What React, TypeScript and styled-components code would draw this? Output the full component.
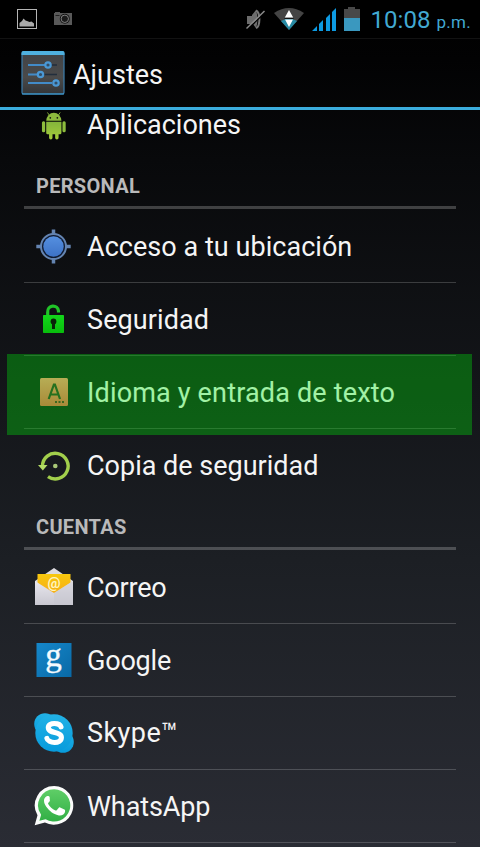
import React from 'react';
import styled, { createGlobalStyle } from 'styled-components';

const GlobalStyle = createGlobalStyle`
  * { box-sizing: border-box; }
  html, body { margin: 0; padding: 0; background: #000; overflow: hidden; }
`;

const Screen = styled.main`
  width: 480px;
  height: 847px;
  display: flex;
  flex-direction: column;
  overflow: hidden;
  font-family: Roboto, sans-serif;
  color: #f5f5f5;
  background: linear-gradient(#000 0, #020203 60px, #08090b 160px, #14161a 400px, #1c1f24 560px, #2a2c34 847px);
`;

const StatusBar = styled.header`
  flex: none;
  display: flex;
  align-items: center;
  justify-content: space-between;
  height: 39px;
  padding: 0 9px 0 17px;
  background: #000;
  border-bottom: 1px solid #121212;
`;

const StatusGroup = styled.div<{ $gap: number }>`
  display: flex;
  align-items: center;
  gap: ${(p) => p.$gap}px;
`;

const Clock = styled.time`
  display: flex;
  align-items: baseline;
  gap: 6px;
  margin-left: 3px;
  padding-top: 3px;
  color: #42a9d2;
  font-size: 24px;
  line-height: 36px;
  white-space: nowrap;
`;

const Meridiem = styled.span`
  font-size: 17px;
  letter-spacing: 0.3px;
`;

const ActionBar = styled.div`
  flex: none;
  display: flex;
  align-items: center;
  gap: 8px;
  height: 71px;
  padding: 0 0 0 21px;
  border-bottom: 3px solid #3badde;
`;

const Title = styled.h1`
  margin: 3px 0 0;
  font-size: 27px;
  line-height: 32px;
  font-weight: 400;
`;

const Viewport = styled.div`
  flex: 1;
  min-height: 0;
  overflow: hidden;
`;

const List = styled.div`
  margin-top: -22px;
  padding: 0 24px;
`;

const Section = styled.section`
  padding-bottom: 0;
`;

const SectionTitle = styled.h2`
  display: flex;
  align-items: center;
  height: 48px;
  margin: 0 0 1px;
  padding: 4px 12px 0;
  border-bottom: 3px solid rgba(255, 255, 255, 0.22);
  color: #b9b9ba;
  font-size: 20px;
  line-height: 24px;
  font-weight: 700;
  letter-spacing: 0.3px;
`;

const Row = styled.div<{ $last?: boolean }>`
  position: relative;
  display: flex;
  align-items: center;
  height: 73px;
  padding-left: 6px;
  border-bottom: ${(p) => (p.$last ? 'none' : '1px solid rgba(255, 255, 255, 0.19)')};
`;

const IconBox = styled.span`
  position: relative;
  z-index: 2;
  display: flex;
  align-items: center;
  justify-content: center;
  width: 48px;
  height: 48px;
  margin-right: 9px;
`;

const Label = styled.span<{ $spacing: number; $bright?: boolean; $raised?: boolean }>`
  padding-top: ${(p) => (p.$raised ? 0 : 1)}px;
  padding-bottom: ${(p) => (p.$raised ? 1 : 0)}px;
  color: ${(p) => (p.$bright ? '#fff' : 'inherit')};
  font-size: 27px;
  line-height: 36px;
  letter-spacing: ${(p) => p.$spacing}px;
  white-space: nowrap;
`;

const Highlight = styled.div`
  position: absolute;
  z-index: 1;
  top: -2px;
  left: -17px;
  right: -16px;
  height: 81px;
  background: rgba(0, 220, 12, 0.37);
`;

const PictureIcon = () => (
  <svg width="20" height="20" viewBox="0 0 20 20">
    <rect x=".5" y=".5" width="19" height="19" fill="none" stroke="#b5b5b5" />
    <path d="M2.500 17.500v-3.500l2.500-2 1.500-2.500 2 2 1.500.5 2.500 1 2-.5 2.500 2v3z" fill="#aaa" />
  </svg>
);

const CameraIcon = () => (
  <svg width="18" height="14" viewBox="0 0 18 14">
    <path d="M0 1h1V0h5v1h12v12H0z" fill="#595959" />
    <circle cx="10.800" cy="6.800" r="5" fill="#111" />
    <circle cx="10.800" cy="6.800" r="3.700" fill="#1a1a1a" stroke="#808080" strokeWidth="1" />
    <path d="M1.500 3.500h4" stroke="#222" />
  </svg>
);

const MutedIcon = () => (
  <svg width="20" height="21" viewBox="0 0 20 21">
    <path d="M1 7h5v8H1zM6 6l4-5q3 9.500 0 18l-4-5z" fill="#6c6c6c" />
    <path d="M10 1.500c4.500 2 4.500 16 0 17.500" fill="none" stroke="#777" strokeWidth="2" />
    <path d="M1.500 20.500 19.500 3" stroke="#000" strokeWidth="1.300" />
    <path d="M.5 19.500 18.500 2" stroke="#8a8a8a" strokeWidth="1.500" />
  </svg>
);

const WifiIcon = () => (
  <svg width="30" height="24" viewBox="0 0 30 24">
    <path d="M0 6Q15-4 30 6L15 23z" fill="#444" />
    <path d="M7 14Q15 9 23 14L15 23z" fill="#278aa4" />
    <path d="M15 3l4.200 7.500h-8.400zM15 20l-4-7.500h8z" fill="#fff" />
    <path d="M10.500 11.500h9" stroke="#111" />
  </svg>
);

const SignalIcon = () => (
  <svg width="24" height="23" viewBox="0 0 24 23">
    <path d="M0 23l5-5v5zM7 16l4-4v11H7zM14 10l4-4v17h-4zM20 4l4-4v23h-4z" fill="#0d9ae2" />
  </svg>
);

const BatteryIcon = () => (
  <svg width="16" height="24" viewBox="0 0 16 24">
    <path d="M4 0h7v2h5v9H0V2h4z" fill="#484848" />
    <path d="M0 11h16v13H0z" fill="#3a98bf" />
  </svg>
);

const SettingsIcon = () => (
  <svg width="44" height="44" viewBox="0 0 44 44">
    <defs>
      <linearGradient id="panel" x2="0" y2="1">
        <stop stopColor="#414347" />
        <stop offset=".6" stopColor="#4a4a4a" />
        <stop offset="1" stopColor="#333538" />
      </linearGradient>
    </defs>
    <rect x="1" y="1" width="42" height="42" rx="1.500" fill="url(#panel)" stroke="#3d7fae" strokeWidth="1.200" />
    <path d="M.5 4V2Q.5 0 2 0h40q1.500 0 1.500 2v2z" fill="#4fb0df" />
    <path d="M1 43h42" stroke="#3fa4dd" />
    <path d="M27 14h9M19 23.500h17" stroke="#222e3c" strokeWidth="1.500" />
    <path d="M7 14h17M7 23.500h9M7 32h24" stroke="#428bc8" strokeWidth="1.800" />
    <g fill="#334d66" stroke="#4a98d5" strokeWidth="2.200">
      <circle cx="27" cy="14" r="2.700" />
      <circle cx="19.500" cy="23.500" r="2.700" />
      <circle cx="35" cy="32" r="2.700" />
    </g>
  </svg>
);

const AndroidIcon = () => (
  <svg width="48" height="48" viewBox="0 0 48 48">
    <defs>
      <linearGradient id="robot" x2="0" y2="1">
        <stop stopColor="#84b53b" />
        <stop offset="1" stopColor="#a6cf3b" />
      </linearGradient>
    </defs>
    <g transform="translate(1.500 .8) scale(.95 1)">
      <path d="M15.500 19a8 8 0 0 1 16 0z" fill="#8dba3d" />
      <path d="M18.500 13l-1.500-2M28.500 13l1.500-2" stroke="#82ad3b" strokeLinecap="round" />
      <circle cx="19.800" cy="16" r=".9" fill="#111" />
      <circle cx="27.200" cy="16" r=".9" fill="#111" />
      <path d="M15.500 20h16v11a1.500 1.500 0 0 1-1.500 1.500h-1.500V36a1.800 1.800 0 0 1-3.600 0v-3.500h-2.800V36a1.800 1.800 0 0 1-3.600 0v-3.500H17a1.500 1.500 0 0 1-1.500-1.500z" fill="url(#robot)" />
      <rect x="11" y="19.500" width="3.400" height="11" rx="1.500" fill="#8dbc3d" />
      <rect x="32.600" y="19.500" width="3.400" height="11" rx="1.500" fill="#8dbc3d" />
    </g>
  </svg>
);

const LocationIcon = () => (
  <svg width="48" height="48" viewBox="0 -1 48 48">
    <defs>
      <linearGradient id="locate" x2="0" y2="1">
        <stop stopColor="#5590e0" />
        <stop offset="1" stopColor="#3d72c7" />
      </linearGradient>
    </defs>
    <path d="M23.500 6.500v5M23.500 35.500v5M6.300 23.500h5M35.700 23.500h5" stroke="#6484b1" strokeWidth="3.500" />
    <circle cx="23.500" cy="23.500" r="12.500" fill="#101b31" stroke="#6484b1" strokeWidth="2" />
    <circle cx="23.500" cy="23.500" r="10.200" fill="url(#locate)" />
  </svg>
);

const LockIcon = () => (
  <svg width="48" height="48" viewBox="0 0 48 48">
    <defs>
      <linearGradient id="lock" x2="0" y2="1">
        <stop stopColor="#13d61b" />
        <stop offset="1" stopColor="#08bd0c" />
      </linearGradient>
    </defs>
    <path d="M17.700 21v-4a5.400 5.400 0 0 1 10.800-1v1.500" fill="none" stroke="#20c428" strokeWidth="3.200" />
    <rect x="13" y="20" width="21" height="18" rx=".7" fill="url(#lock)" />
    <circle cx="23.500" cy="26.500" r="2.900" fill="#092309" />
    <path d="M22 27h3v7h-3z" fill="#092309" />
  </svg>
);

const LanguageIcon = () => (
  <svg width="48" height="48" viewBox="0 0 48 48">
    <defs>
      <linearGradient id="keycap" x2="0" y2="1">
        <stop stopColor="#b7ad55" />
        <stop offset="1" stopColor="#a88a38" />
      </linearGradient>
    </defs>
    <rect x="10" y="10" width="28" height="28" rx="1.500" fill="url(#keycap)" />
    <path d="M18.700 31l5.200-14.500h1L30 31M20.300 26.500h8" fill="none" stroke="#24701f" strokeWidth="2.200" />
    <path d="M25 33h2v2h-2zM28.500 33h2v2h-2zM32 33h2v2h-2z" fill="#3c681f" />
  </svg>
);

const BackupIcon = () => (
  <svg width="48" height="48" viewBox="0 0 48 48">
    <path d="M12.500 24a12.800 12.800 0 1 1 5.500 10.600" fill="none" stroke="#a2cf4c" strokeWidth="3.400" />
    <path d="M8 23h9.500l-4.700 5.500z" fill="#b4dd66" />
    <circle cx="25.300" cy="24" r="2.300" fill="#a9c878" />
  </svg>
);

const MailIcon = () => (
  <svg width="48" height="48" viewBox="0 0 48 48">
    <defs>
      <linearGradient id="letter" x2="0" y2="1">
        <stop stopColor="#f7c80d" />
        <stop offset="1" stopColor="#f8a818" />
      </linearGradient>
      <linearGradient id="fold" x2="0" y2="1">
        <stop stopColor="#e8e7ee" />
        <stop offset="1" stopColor="#c8c7d0" />
      </linearGradient>
    </defs>
    <path d="M5 18L24 5l19 13v24H5z" fill="#dcdbe0" />
    <path d="M7.500 11h33v13L24 34 7.500 24z" fill="url(#letter)" />
    <path d="M5 18l19 12 19-12v24H5z" fill="url(#fold)" />
    <path d="M24 30l19-12v24H24z" fill="#c6c5cf" opacity=".45" />
    <text x="24" y="25.300" textAnchor="middle" fontFamily="Roboto, sans-serif" fontSize="14.500" fontWeight="700" fill="#fff5bd">@</text>
  </svg>
);

const GoogleIcon = () => (
  <svg width="48" height="48" viewBox="0 0 48 48">
    <defs>
      <linearGradient id="tile" x2="1" y2="1">
        <stop stopColor="#1587ca" />
        <stop offset="1" stopColor="#0969a6" />
      </linearGradient>
    </defs>
    <rect x="6.500" y="7" width="35" height="34" fill="url(#tile)" />
    <text
      x="23.500"
      y="29.500"
      textAnchor="middle"
      fontFamily="'Liberation Serif', serif"
      fontSize="33"
      fill="#f4fafe"
      stroke="#f4fafe"
      strokeWidth=".4"
    >
      g
    </text>
  </svg>
);

const SkypeIcon = () => (
  <svg width="48" height="48" viewBox="0 0 48 48">
    <defs>
      <linearGradient id="cloud" x2="0" y2="1">
        <stop stopColor="#22b2e6" />
        <stop offset="1" stopColor="#079bdc" />
      </linearGradient>
    </defs>
    <g fill="url(#cloud)">
      <circle cx="15" cy="15" r="10.800" />
      <circle cx="33" cy="33" r="10.800" />
      <circle cx="24" cy="24" r="18.700" />
    </g>
    <path d="M31 17.800c-1-4-12.700-5-12.700.8 0 6.400 13.100 3.500 13.100 9.900 0 7.200-13.600 5.800-14.500.9" fill="none" stroke="#fff" strokeWidth="5.100" strokeLinecap="round" />
  </svg>
);

const WhatsAppIcon = () => (
  <svg width="48" height="48" viewBox="0 0 48 48">
    <defs>
      <linearGradient id="bubble" x2="0" y2="1">
        <stop stopColor="#5fce67" />
        <stop offset="1" stopColor="#31af45" />
      </linearGradient>
    </defs>
    <path d="M24.200 4a19.400 19.400 0 1 1-9.300 36.600L4.700 43.200l2.800-10A19.400 19.400 0 0 1 24.200 4z" fill="#fbfcfb" />
    <path d="M24.200 7.200a16.200 16.200 0 1 1-8.600 30l-6.200 1.600 1.700-6A16.200 16.200 0 0 1 24.200 7.200z" fill="url(#bubble)" />
    <path d="M19.700 15.200c-.5-1.100-1-1.200-1.800-1.200-1.500 0-3.900 1.700-3.900 5 0 2.700 1.900 5.300 3.100 6.700 2.200 2.800 5.700 6.300 11.700 7.700 2.900.7 5.900-1.600 6.200-3.500.3-1.600.1-2-.6-2.400l-4.300-2c-.7-.3-1.100-.1-1.500.4l-1.900 2.300c-.3.400-.8.400-1.300.2-3.200-1.300-5.600-3.600-7.200-6.400-.3-.5-.1-.8.200-1.200l1.300-1.600c.3-.4.300-.8.100-1.300z" fill="#fff" />
  </svg>
);

type Entry = { label: string; icon: React.FC; spacing?: number; selected?: boolean; raised?: boolean };

const PERSONAL: Entry[] = [
  { label: 'Acceso a tu ubicación', icon: LocationIcon, spacing: 0.04 },
  { label: 'Seguridad', icon: LockIcon, spacing: 0.1 },
  { label: 'Idioma y entrada de texto', icon: LanguageIcon, spacing: 0.17, selected: true },
  { label: 'Copia de seguridad', icon: BackupIcon },
];

const ACCOUNTS: Entry[] = [
  { label: 'Correo', icon: MailIcon, spacing: -0.2 },
  { label: 'Google', icon: GoogleIcon, spacing: -0.2 },
  { label: 'Skype™', icon: SkypeIcon, spacing: 0.45, raised: true },
  { label: 'WhatsApp', icon: WhatsAppIcon, spacing: -0.1 },
];

const SettingRow = ({ entry, last }: { entry: Entry; last?: boolean }) => {
  const Icon = entry.icon;
  return (
    <Row $last={last}>
      <IconBox><Icon /></IconBox>
      <Label $spacing={entry.spacing ?? 0} $bright={entry.selected} $raised={entry.raised}>
        {entry.label}
      </Label>
      {entry.selected && <Highlight />}
    </Row>
  );
};

export default function App() {
  return (
    <>
      <GlobalStyle />
      <Screen>
        <StatusBar>
          <StatusGroup $gap={17}>
            <PictureIcon />
            <CameraIcon />
          </StatusGroup>
          <StatusGroup $gap={8}>
            <MutedIcon />
            <WifiIcon />
            <SignalIcon />
            <BatteryIcon />
            <Clock>10:08<Meridiem>p.m.</Meridiem></Clock>
          </StatusGroup>
        </StatusBar>
        <ActionBar>
          <SettingsIcon />
          <Title>Ajustes</Title>
        </ActionBar>
        <Viewport>
          <List>
            <SettingRow entry={{ label: 'Aplicaciones', icon: AndroidIcon }} last />
            <Section>
              <SectionTitle>PERSONAL</SectionTitle>
              {PERSONAL.map((entry, i) => (
                <SettingRow key={entry.label} entry={entry} last={i === PERSONAL.length - 1} />
              ))}
            </Section>
            <Section>
              <SectionTitle>CUENTAS</SectionTitle>
              {ACCOUNTS.map((entry) => (
                <SettingRow key={entry.label} entry={entry} />
              ))}
            </Section>
          </List>
        </Viewport>
      </Screen>
    </>
  );
}
